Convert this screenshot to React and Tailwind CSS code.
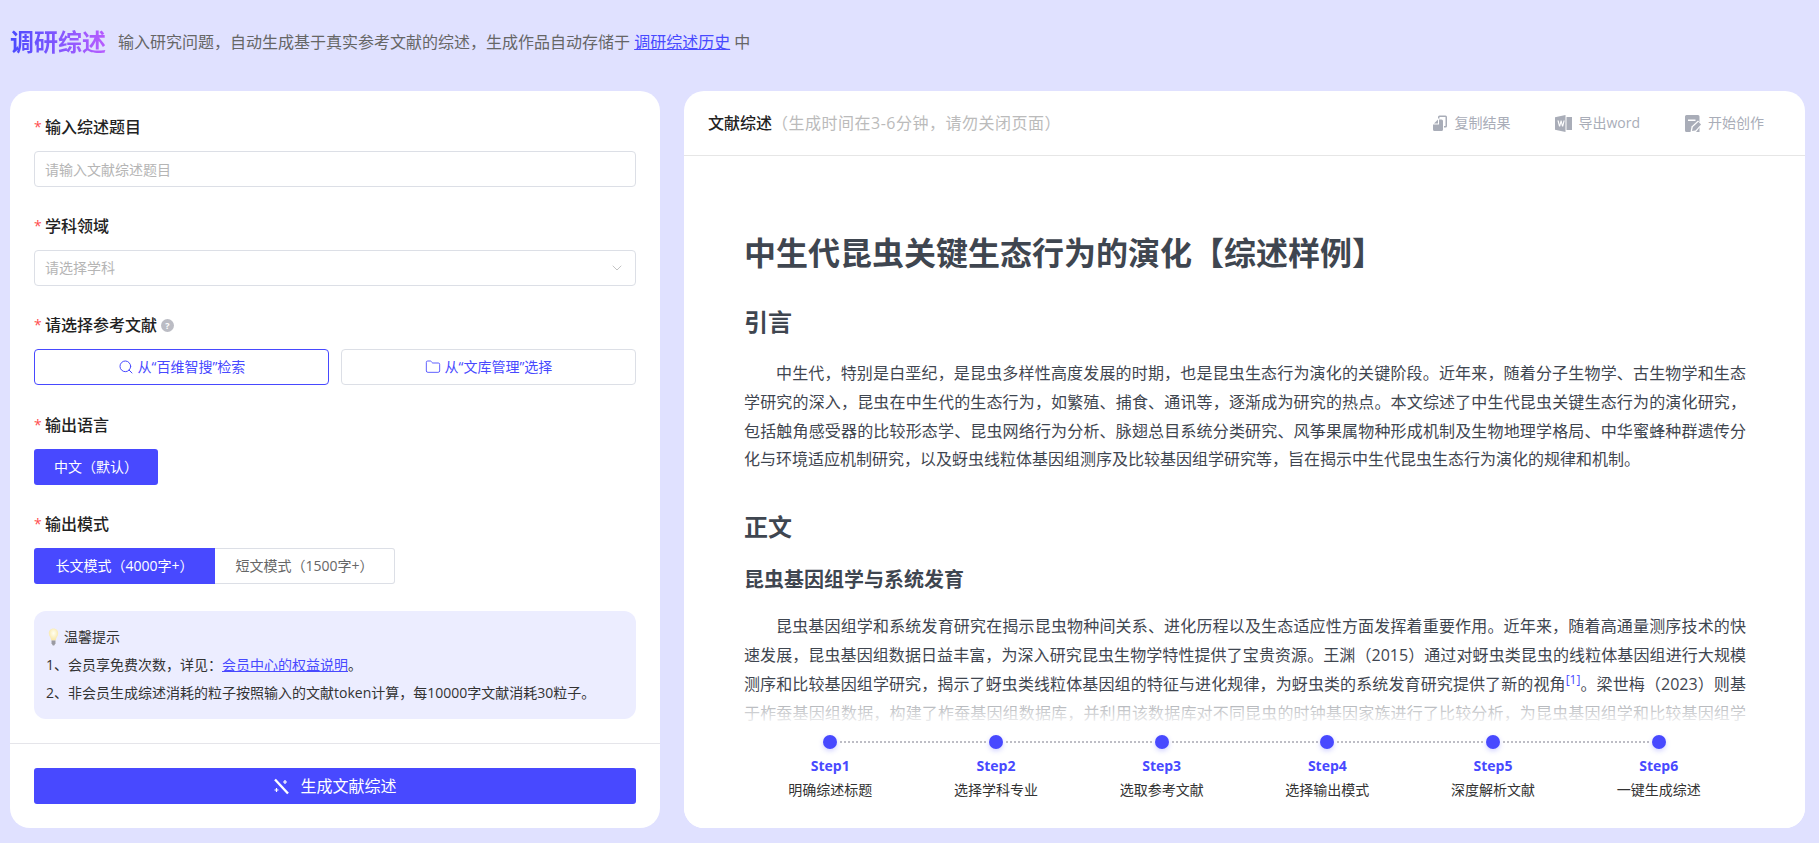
import { Search, Folder, ChevronDown } from "lucide-react";

const steps = [
  ["Step1", "明确综述标题"],
  ["Step2", "选择学科专业"],
  ["Step3", "选取参考文献"],
  ["Step4", "选择输出模式"],
  ["Step5", "深度解析文献"],
  ["Step6", "一键生成综述"],
];

function FieldLabel({ children, extra }) {
  return (
    <div className="flex items-center h-6 mb-3 text-base font-medium text-[#222]">
      <span className="text-[#ff4d4f] text-sm w-[11px] leading-none">*</span>
      {children}
      {extra}
    </div>
  );
}

function CopyIcon() {
  return (
    <svg width="15" height="16" viewBox="0 0 15 16" fill="#a9adb8">
      <path d="M5 3.500V2a1.500 1.500 0 0 1 1.500-1.500h6A1.500 1.500 0 0 1 14 2v9a1.500 1.500 0 0 1-1.500 1.500H11V11h1.500V2h-6v1.500z" />
      <path d="M5 4.500v4H1zM6 4.500h2.500A1.500 1.500 0 0 1 10 6v8.500a1.500 1.500 0 0 1-1.500 1.500h-7A1.500 1.500 0 0 1 0 14.500V9.500h6z" />
    </svg>
  );
}

function WordIcon() {
  return (
    <svg width="17" height="17" viewBox="0 0 17 17" fill="#a9adb8">
      <path d="M0 2.200 10.500 0v17L0 14.800z" />
      <path d="M11.500 2H17v13h-5.500z" />
      <path d="M2.400 5.400h1.300l.9 4 1-4h1l1 4 .9-4h1.200L8.200 11.600H7L6.100 8l-.9 3.600H4z" fill="#fff" />
    </svg>
  );
}

function CreateIcon() {
  return (
    <svg width="17" height="17" viewBox="0 0 17 17" fill="#a9adb8">
      <path d="M1.500 0H13a1.500 1.500 0 0 1 1.500 1.500V17h-13A1.500 1.500 0 0 1 0 15.500v-14A1.500 1.500 0 0 1 1.500 0z" />
      <path d="M3 4.500h7.500V6H3z" fill="#fff" />
      <path d="M5.500 17 6.500 11.500 13 5.500 17 9.500 11 17z" fill="#fff" />
      <path d="M7 16 7.800 12 13.500 6.800 16 9.500 10.500 15.500z" />
    </svg>
  );
}

function WandIcon() {
  return (
    <svg width="17" height="17" viewBox="0 0 17 17" fill="none" stroke="#fff">
      <path d="M2 1.500 15 15.500" strokeWidth="2.400" />
      <path d="M12 2v4M10 4h4M3.500 10v4M1.500 12h4" strokeWidth="1.200" />
    </svg>
  );
}

function BulbIcon() {
  return (
    <svg width="11" height="18" viewBox="0 0 12 20" className="shrink-0 ml-[2px]">
      <defs>
        <radialGradient id="bulbGlow" cx="50%" cy="40%" r="60%">
          <stop offset="0%" stopColor="#fffff2" />
          <stop offset="100%" stopColor="#f8e6a4" />
        </radialGradient>
      </defs>
      <path d="M6 .5C2.800.5.800 2.900.800 5.800c0 3 2.400 5 2.800 8h4.800c.4-3 2.800-5 2.800-8C11.200 2.900 9.200.5 6 .5z" fill="url(#bulbGlow)" />
      <path d="M3.800 14h4.400v3L6.800 19.500H5.200L3.800 17z" fill="#9a9aa2" />
    </svg>
  );
}

export default function App() {
  return (
    <div className="h-[843px] overflow-hidden bg-[#e0e1ff] font-['Open_Sans','Noto_Sans_CJK_SC',sans-serif] flex flex-col">
      {/* Page title */}
      <div className="h-[91px] shrink-0 pl-[10px] pb-2 flex items-center">
        <span className="text-2xl font-bold bg-linear-to-r from-[#4849ff] to-[#b85cff] bg-clip-text text-transparent">
          调研综述
        </span>
        <span className="ml-3 text-base text-[#666]">
          输入研究问题，自动生成基于真实参考文献的综述，生成作品自动存储于{" "}
          <span className="text-[#4849ff] underline">调研综述历史</span> 中
        </span>
      </div>

      <div className="flex gap-6 pl-[10px] pr-[14px] h-[737px]">
        {/* Form */}
        <div className="w-[650px] shrink-0 bg-white rounded-[20px] flex flex-col">
          <div className="px-6 pt-6">
            <FieldLabel>输入综述题目</FieldLabel>
            <input
              placeholder="请输入文献综述题目"
              className="w-full h-9 px-[10px] text-sm border border-[#dcdfe6] rounded placeholder:text-[#b5b5b5] outline-none mb-[27px]"
            />

            <FieldLabel>学科领域</FieldLabel>
            <div className="h-9 px-[10px] text-sm text-[#b5b5b5] border border-[#dcdfe6] rounded flex items-center justify-between mb-[27px]">
              <span>请选择学科</span>
              <ChevronDown size={16} strokeWidth={1.2} color="#b5b5b5" />
            </div>

            <FieldLabel
              extra={
                <span className="ml-1 w-[13px] h-[13px] rounded-full bg-[#bbbcc4] text-white text-[9px] leading-[13px] text-center font-bold">
                  ?
                </span>
              }
            >
              请选择参考文献
            </FieldLabel>
            <div className="grid grid-cols-2 gap-3 mb-[28px]">
              <div className="h-9 border border-[#4849ff] rounded flex items-center justify-center gap-1 text-sm text-[#4849ff]">
                <Search size={16} strokeWidth={1.5} />
                从“百维智搜”检索
              </div>
              <div className="h-9 border border-[#dcdfe6] rounded flex items-center justify-center gap-1 text-sm text-[#4849ff]">
                <Folder size={16} strokeWidth={1.3} />
                从“文库管理”选择
              </div>
            </div>

            <FieldLabel>输出语言</FieldLabel>
            <div className="mb-[27px]">
              <span className="inline-flex h-9 px-5 items-center bg-[#4849ff] text-white text-sm rounded-[3px]">
                中文（默认）
              </span>
            </div>

            <FieldLabel>输出模式</FieldLabel>
            <div className="flex mb-[27px]">
              <span className="flex w-[181px] h-9 items-center justify-center bg-[#4849ff] text-white text-sm rounded-l-[3px]">
                长文模式（4000字+）
              </span>
              <span className="flex w-[180px] h-9 items-center justify-center border border-l-0 border-[#dcdfe6] text-[#666] text-sm rounded-r-[3px]">
                短文模式（1500字+）
              </span>
            </div>

            <div className="h-[108px] bg-[#ecedff] rounded-xl px-3 py-3 text-sm leading-7 text-[#333]">
              <div className="flex items-center gap-[5px]">
                <BulbIcon />
                温馨提示
              </div>
              <div>
                1、会员享免费次数，详见：
                <span className="text-[#4849ff] underline">会员中心的权益说明</span>。
              </div>
              <div>2、非会员生成综述消耗的粒子按照输入的文献token计算，每10000字文献消耗30粒子。</div>
            </div>
          </div>

          <div className="mt-6 border-t border-[#e5e5ea] px-6 pt-6">
            <div className="h-9 bg-[#4849ff] rounded-[3px] flex items-center justify-center gap-[10px] text-base text-white">
              <WandIcon />
              生成文献综述
            </div>
          </div>
        </div>

        {/* Result */}
        <div className="flex-1 min-w-0 bg-white rounded-[20px] flex flex-col relative overflow-hidden">
          <div className="h-[65px] shrink-0 border-b border-[#e6e6e6] pl-6 pr-[41px] flex items-center justify-between">
            <div className="text-base">
              <span className="font-medium text-[#222]">文献综述</span>
              <span className="text-[#bbb] tracking-[0.5px]">（生成时间在3-6分钟，请勿关闭页面）</span>
            </div>
            <div className="flex items-center gap-[45px] text-sm text-[#a9adb8]">
              <span className="flex items-center gap-[6px]">
                <CopyIcon />
                复制结果
              </span>
              <span className="flex items-center gap-[6px]">
                <WordIcon />
                导出word
              </span>
              <span className="flex items-center gap-[6px]">
                <CreateIcon />
                开始创作
              </span>
            </div>
          </div>

          <div className="flex-1 overflow-hidden pl-[60px] pr-[59px] pt-[73px] text-[#3f4650]">
            <h1 className="text-[32px] leading-[48px] font-bold">中生代昆虫关键生态行为的演化【综述样例】</h1>
            <h2 className="mt-[27px] text-2xl leading-9 font-bold">引言</h2>
            <p className="mt-[19px] text-base leading-[28.800px] indent-8 text-justify">
              中生代，特别是白垩纪，是昆虫多样性高度发展的时期，也是昆虫生态行为演化的关键阶段。近年来，随着分子生物学、古生物学和生态学研究的深入，昆虫在中生代的生态行为，如繁殖、捕食、通讯等，逐渐成为研究的热点。本文综述了中生代昆虫关键生态行为的演化研究，包括触角感受器的比较形态学、昆虫网络行为分析、脉翅总目系统分类研究、风筝果属物种形成机制及生物地理学格局、中华蜜蜂种群遗传分化与环境适应机制研究，以及蚜虫线粒体基因组测序及比较基因组学研究等，旨在揭示中生代昆虫生态行为演化的规律和机制。
            </p>
            <h2 className="mt-[35px] text-2xl leading-9 font-bold">正文</h2>
            <h3 className="mt-[20px] text-xl leading-[30px] font-bold">昆虫基因组学与系统发育</h3>
            <p className="mt-[17px] text-base leading-[28.800px] indent-8 text-justify">
              昆虫基因组学和系统发育研究在揭示昆虫物种间关系、进化历程以及生态适应性方面发挥着重要作用。近年来，随着高通量测序技术的快速发展，昆虫基因组数据日益丰富，为深入研究昆虫生物学特性提供了宝贵资源。王渊（2015）通过对蚜虫类昆虫的线粒体基因组进行大规模测序和比较基因组学研究，揭示了蚜虫类线粒体基因组的特征与进化规律，为蚜虫类的系统发育研究提供了新的视角
              <sup className="text-[#4849ff] text-xs">[1]</sup>
              。梁世梅（2023）则基于柞蚕基因组数据，构建了柞蚕基因组数据库，并利用该数据库对不同昆虫的时钟基因家族进行了比较分析，为昆虫基因组学和比较基因组学研究提供了重要参考。
            </p>
          </div>

          {/* Steps overlay */}
          <div className="absolute inset-x-0 bottom-0">
            <div className="h-[28px] bg-linear-to-b from-white/50 to-white" />
            <div className="bg-white h-[101px] pt-[8px] flex justify-center">
              {steps.map(([step, desc], i) => (
                <div key={step} className="w-[165.700px] flex flex-col items-center relative">
                  <div className="w-[14px] h-[14px] rounded-full bg-[#4849ff] shadow-[0_2px_5px_rgba(72,73,255,0.25)]" />
                  {i < steps.length - 1 && (
                    <div className="absolute top-[6px] left-[calc(50%+10px)] w-[146px] border-t-2 border-dotted border-[#bdbdc5]" />
                  )}
                  <div className="mt-[7px] text-sm leading-5 font-bold text-[#4849ff]">{step}</div>
                  <div className="mt-1 text-sm leading-5 text-[#333]">{desc}</div>
                </div>
              ))}
            </div>
          </div>
        </div>
      </div>
    </div>
  );
}
